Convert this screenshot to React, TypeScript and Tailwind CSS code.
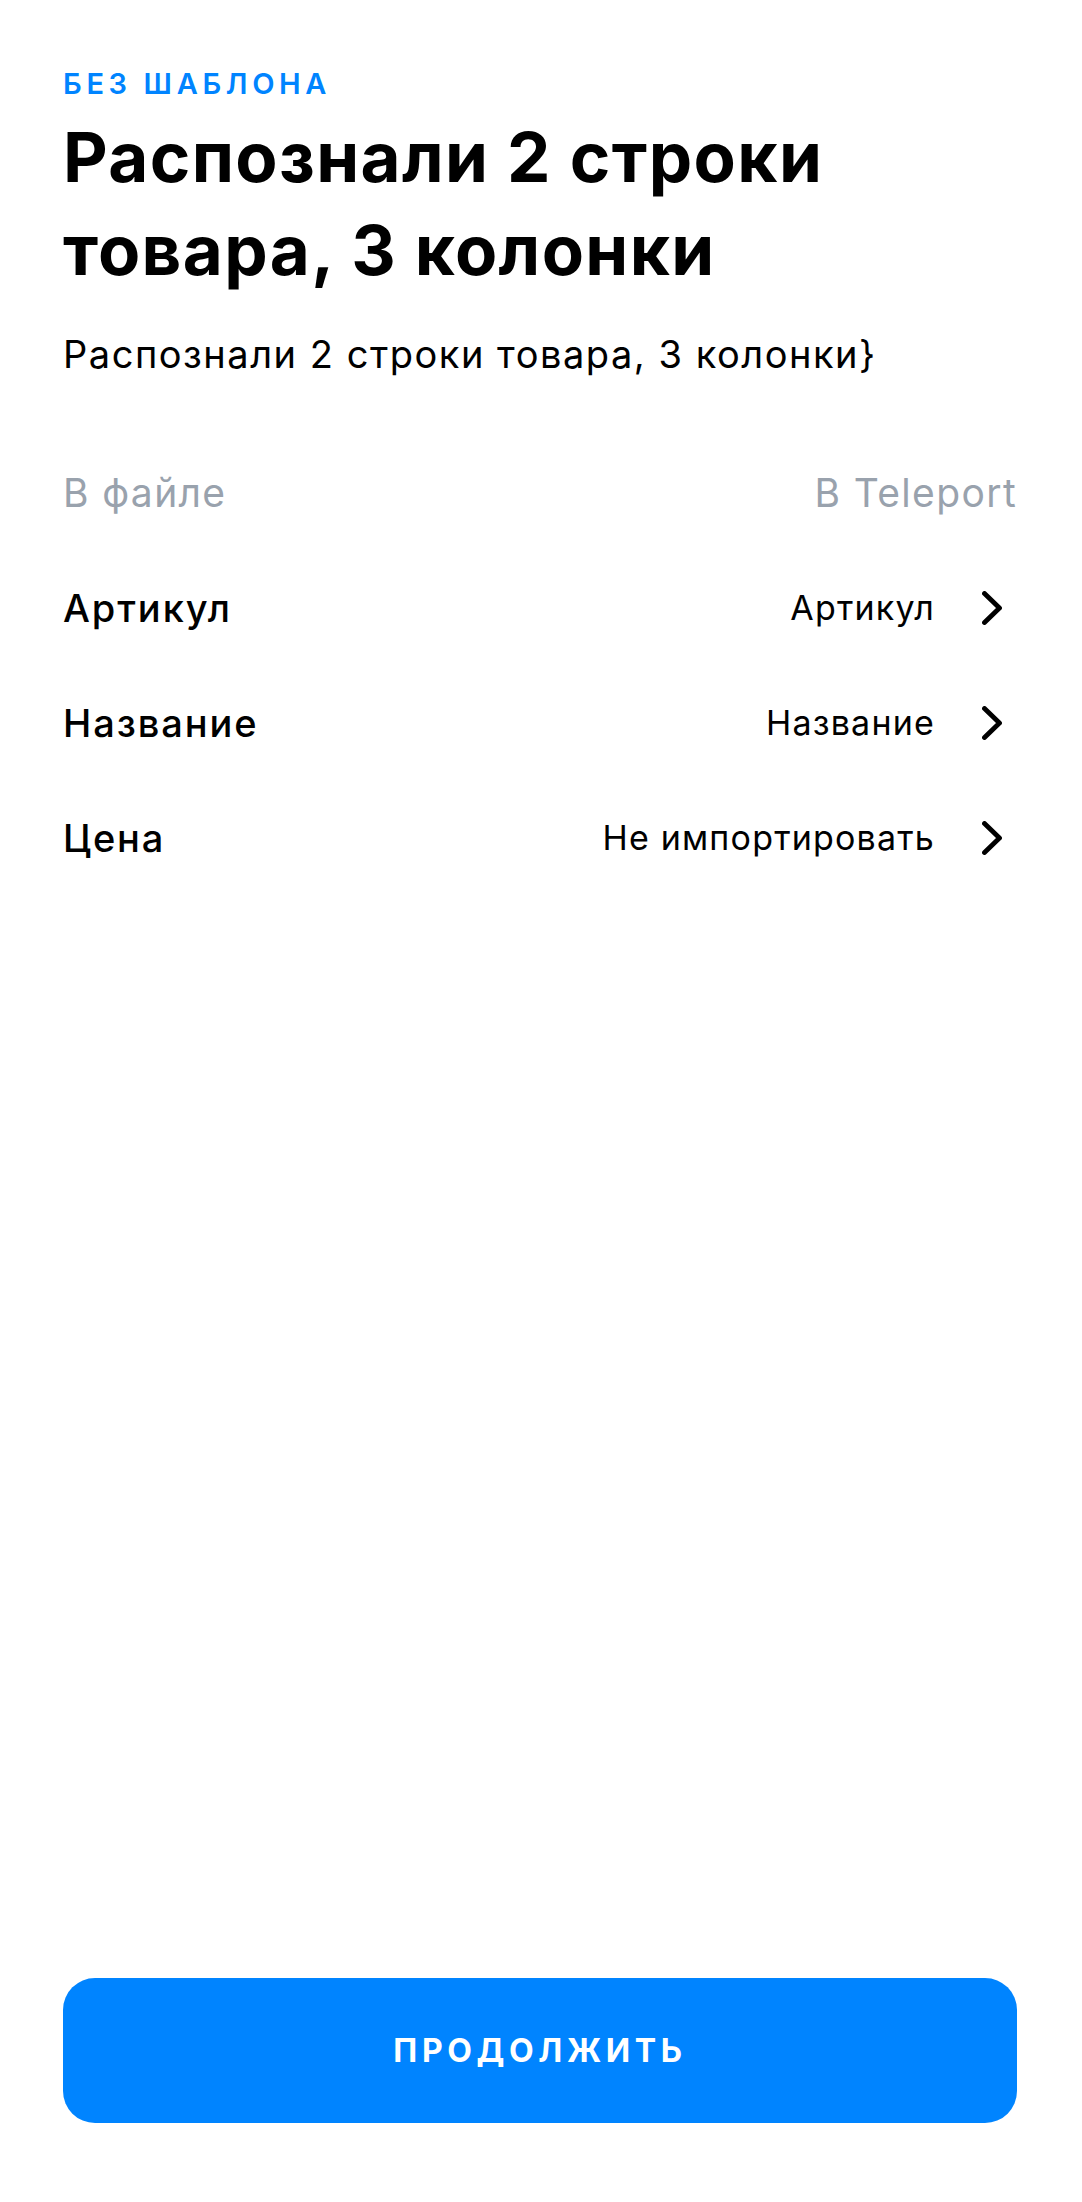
import React from "react";

const rows = [
  { left: "Артикул", right: "Артикул" },
  { left: "Название", right: "Название" },
  { left: "Цена", right: "Не импортировать" },
];

function Chevron() {
  return (
    <svg width="20" height="34" viewBox="0 0 20 34" fill="none" className="ml-[47px] mr-[15px] shrink-0">
      <polyline points="2.5,2.5 17.5,17 2.5,31.5" stroke="#000" strokeWidth="4.8" strokeLinecap="round" strokeLinejoin="round" />
    </svg>
  );
}

export default function App() {
  return (
    <div
      className="min-h-screen w-full bg-white flex flex-col pl-[63px] pr-[65px] text-black"
      style={{ fontFamily: "Inter, 'Noto Sans', sans-serif" }}
    >
      <div className="pt-[66px] text-[29px] leading-[36px] font-semibold tracking-[0.16em] text-[#0084ff]">
        БЕЗ ШАБЛОНА
      </div>
      <h1 className="mt-[9px] text-[69px] leading-[93px] font-bold tracking-[0.02em]">
        Распознали 2 строки товара, 3 колонки
      </h1>
      <p className="mt-[33px] text-[38px] leading-[48px] tracking-[0.04em]">
        Распознали 2 строки товара, 3 колонки{"}"}
      </p>

      <div className="mt-[57px] h-[115px] flex items-center justify-between text-[39px] leading-[46px] tracking-[0.035em] text-[#99a2ad]">
        <span>В файле</span>
        <span>В Teleport</span>
      </div>
      {rows.map((r) => (
        <div key={r.left} className="h-[115px] flex items-center justify-between">
          <span className="text-[38px] leading-[46px] font-medium tracking-[0.05em]">{r.left}</span>
          <div className="flex items-center">
            <span className="text-[34px] leading-[46px] tracking-[0.035em]">{r.right}</span>
            <Chevron />
          </div>
        </div>
      ))}

      <button className="mt-auto mb-[79px] h-[145px] w-full rounded-[32px] bg-[#0084ff] text-white text-[32px] font-bold tracking-[0.145em]">
        ПРОДОЛЖИТЬ
      </button>
    </div>
  );
}
